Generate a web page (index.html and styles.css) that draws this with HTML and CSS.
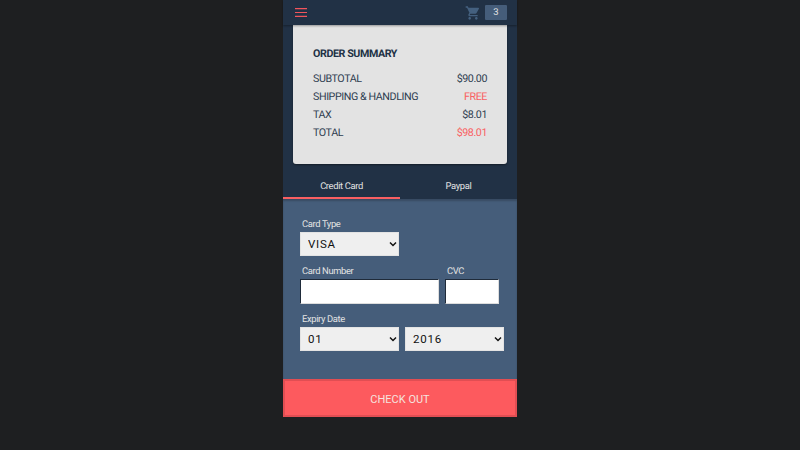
FILE: index.html
```html
<!DOCTYPE html>
<html lang="en">
<head>
<meta charset="utf-8">
<title>Checkout</title>
<link rel="stylesheet" href="styles.css">
</head>
<body>
<div class="phone">
  <header class="topbar">
    <svg class="menu" width="12" height="9" viewBox="0 0 12 9"><path d="M0 .7h12M0 4.500h12M0 8.300h12" stroke="#f2555c" stroke-width="1.200" fill="none"/></svg>
    <div class="cart">
      <svg class="cart-icon" width="16" height="16" viewBox="0 0 24 24"><path fill="#44607f" d="M7 18c-1.100 0-1.990.9-1.990 2S5.900 22 7 22s2-.9 2-2-.9-2-2-2zM1 2v2h2l3.600 7.590-1.350 2.450c-.16.280-.25.610-.25.960 0 1.100.9 2 2 2h12v-2H7.420c-.14 0-.25-.11-.25-.25l.03-.12.9-1.630h7.450c.75 0 1.410-.41 1.750-1.030l3.580-6.490c.08-.14.120-.31.120-.48 0-.55-.45-1-1-1H5.210l-.94-2H1zm16 16c-1.100 0-1.990.9-1.990 2s.89 2 1.990 2 2-.9 2-2-.9-2-2-2z"/></svg>
      <span class="badge">3</span>
    </div>
  </header>
  <section class="summary-wrap">
    <div class="summary">
      <h2 class="summary-title">ORDER SUMMARY</h2>
      <div class="row"><span>SUBTOTAL</span><span>$90.00</span></div>
      <div class="row"><span>SHIPPING &amp; HANDLING</span><span class="hot">FREE</span></div>
      <div class="row"><span>TAX</span><span>$8.01</span></div>
      <div class="row"><span>TOTAL</span><span class="hot">$98.01</span></div>
    </div>
  </section>
  <nav class="tabs">
    <div class="tab active">Credit Card</div>
    <div class="tab">Paypal</div>
  </nav>
  <form class="form">
    <div class="line">
      <label class="field">
        <span class="label">Card Type</span>
        <select class="select"><option>VISA</option></select>
      </label>
    </div>
    <div class="line">
      <label class="field">
        <span class="label">Card Number</span>
        <input class="input number" type="text">
      </label>
      <label class="field">
        <span class="label">CVC</span>
        <input class="input cvc" type="text">
      </label>
    </div>
    <div class="line">
      <label class="field">
        <span class="label">Expiry Date</span>
        <select class="select"><option>01</option></select>
      </label>
      <label class="field">
        <span class="label">&nbsp;</span>
        <select class="select"><option>2016</option></select>
      </label>
    </div>
  </form>
  <button class="checkout" type="button">CHECK OUT</button>
</div>
</body>
</html>
```
FILE: styles.css
```css
* { box-sizing: border-box; }
html, body { margin: 0; height: 100%; }
body {
  background: #1e1f21;
  font-family: Roboto, "Liberation Sans", sans-serif;
  text-rendering: geometricPrecision;
  overflow: hidden;
}
.phone {
  width: 234px;
  margin: 0 auto;
  height: 417px;
  display: flex;
  flex-direction: column;
  background: #213145;
}
.topbar {
  height: 25px;
  flex: none;
  display: flex;
  align-items: center;
  justify-content: space-between;
  padding: 0 10px 0 12px;
  background: #213145;
  box-shadow: 0 1px 2px rgba(0,0,0,.35);
  position: relative;
  z-index: 1;
}
.cart { display: flex; align-items: center; gap: 4px; }
.badge {
  width: 22px;
  height: 15px;
  background: #455d7a;
  color: #e3e3e3;
  font-size: 9.500px;
  line-height: 15px;
  text-align: center;
  border-radius: 1px;
}
.summary-wrap { padding: 0 10px; flex: none; }
.summary {
  height: 139px;
  background: #e3e3e3;
  border-radius: 0 0 3px 3px;
  padding: 21px 20px 0 20px;
  color: #2f3d50;
  font-size: 10.700px;
  letter-spacing: -0.420px;
  box-shadow: 0 1px 2px rgba(0,0,0,.4);
}
.summary-title {
  margin: 0 0 9px;
  font-size: 10.700px;
  line-height: 15px;
  font-weight: 700;
  color: #213145;
}
.row {
  display: flex;
  justify-content: space-between;
  height: 18px;
  line-height: 18px;
}
.hot { color: #f95f62; }
.tabs {
  display: flex;
  flex: none;
  height: 35px;
  color: #e3e3e3;
  font-size: 9.400px;
  letter-spacing: -0.360px;
}
.tab {
  flex: 1;
  text-align: center;
  padding-top: 16px;
  line-height: 13px;
}
.tab.active { border-bottom: 2px solid #f95f62; }
.form {
  flex: 1;
  background: #455d7a;
  padding: 19px 13px 0 17px;
  box-shadow: inset 0 2px 2px rgba(0,0,0,.2);
}
.line { display: flex; gap: 6px; margin-bottom: 9px; }
.field { display: flex; flex-direction: column; }
.label {
  color: #e3e3e3;
  font-size: 9.400px;
  letter-spacing: -0.360px;
  line-height: 13px;
  padding-left: 2px;
  margin-bottom: 1px;
}
.select {
  appearance: none;
  width: 99px;
  height: 24px;
  background: #efefef url("data:image/svg+xml,%3Csvg xmlns='http://www.w3.org/2000/svg' width='8' height='6' viewBox='0 0 8 6'%3E%3Cpath d='M1 1.500l3 3 3-3' stroke='%23111' stroke-width='1.500' fill='none'/%3E%3C/svg%3E") no-repeat right 1px center;
  border: 1px solid #e3e3e3;
  border-radius: 0;
  color: #111;
  font-family: Roboto, sans-serif;
  font-size: 11.500px;
  letter-spacing: 0.750px;
  padding: 0 0 0 7px;
}
.input {
  height: 25px;
  background: #fff;
  border: solid;
  border-color: #1f2b3a #ddd #ddd #1f2b3a;
  border-width: 1.500px 1px 1px 1px;
  border-radius: 0;
  padding: 0;
}
.number { width: 139px; }
.cvc { width: 54px; }
.checkout {
  flex: none;
  height: 38px;
  background: #fd5a5e;
  border: 2px solid #e14e53;
  color: #f5e3df;
  font-family: Roboto, sans-serif;
  font-size: 11px;
  padding: 3px 0 0;
}
```
